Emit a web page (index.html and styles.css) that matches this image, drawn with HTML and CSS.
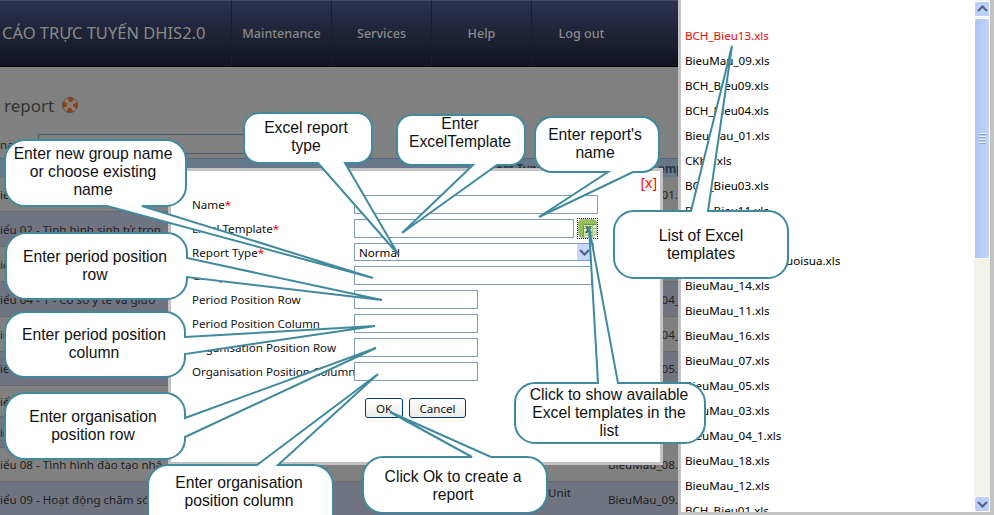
FILE: index.html
```html
<!DOCTYPE html>
<html lang="en">
<head>
    <meta charset="UTF-8">
    <title>Excel report</title>
    <link rel="stylesheet" href="styles.css">
</head>
<body>
    <div class="app">
        <div class="main">
            <div class="topbar">
                <div class="brand">CÁO TRỰC TUYẾN DHIS2.0</div>
                <div class="nav-item">Maintenance</div>
                <div class="nav-item">Services</div>
                <div class="nav-item">Help</div>
                <div class="nav-item">Log out</div>
            </div>
            <div class="content">
                <div class="heading">
                    <span>report</span>
                    <svg class="help-icon" width="16" height="16" viewBox="0 0 16 16">
                        <circle cx="8" cy="8" r="5.5" fill="none" stroke="#8c8078" stroke-width="4.500"/>
                        <circle cx="8" cy="8" r="5.5" fill="none" stroke="#8f3f12" stroke-width="4.500" stroke-dasharray="5 3.640" stroke-dashoffset="2.500"/>
                        <circle cx="8" cy="8" r="7.500" fill="none" stroke="#5f4c42" stroke-width="1"/>
                    </svg>
                </div>
                <div class="filter">
                    <span class="filter-label">na</span>
                    <div class="filter-input"></div>
                </div>
                <div class="table-head">
                    <span class="col-name">ort Type</span>
                    <span class="col-file">emp</span>
                </div>
                <div class="row"><span class="col-name">iểu 01 - Dân số</span><span class="col-file">BieuMau_01.</span></div>
                <div class="row alt"><span class="col-name">iểu 02 - Tình hình sinh tử trọn</span><span class="col-file">BieuMau_02.</span></div>
                <div class="row"><span class="col-name">iểu 03 - Tình hình</span><span class="col-file">BieuMau_03.</span></div>
                <div class="row alt"><span class="col-name">iểu 04 - 1 - Cơ sở y tế và giườ</span><span class="col-file">BieuMau_04_</span></div>
                <div class="row"><span class="col-name">iểu 04 - 2</span><span class="col-file">BieuMau_04_</span></div>
                <div class="row alt tight"><span class="col-name">iểu 05</span><span class="col-file">BieuMau_05.</span></div>
                <div class="row short"><span class="col-name">iểu 06</span><span class="col-file">BieuMau_06.</span></div>
                <div class="row alt short"><span class="col-name">iểu 07</span><span class="col-file">BieuMau_07.</span></div>
                <div class="row tight"><span class="col-name">iểu 08 - Tình hình đào tạo nhâ</span><span class="col-file">BieuMau_08.</span></div>
                <div class="row alt"><span class="col-name">iểu 09 - Hoạt động chăm sóc</span><span class="col-unit">Unit</span><span class="col-file">BieuMau_09.</span></div>
            </div>
        </div>

        <div class="panel">
            <ul class="file-list">
                <li class="selected">BCH_Bieu13.xls</li>
                <li>BieuMau_09.xls</li>
                <li>BCH_Bieu09.xls</li>
                <li>BCH_Bieu04.xls</li>
                <li>BieuMau_01.xls</li>
                <li>CKho.xls</li>
                <li>BCH_Bieu03.xls</li>
                <li>BCH_Bieu11.xls</li>
                <li>BCH_Bieu02.xls</li>
                <li>BieuMau_13_1_1_cuoisua.xls</li>
                <li>BieuMau_14.xls</li>
                <li>BieuMau_11.xls</li>
                <li>BieuMau_16.xls</li>
                <li>BieuMau_07.xls</li>
                <li>BieuMau_05.xls</li>
                <li>BieuMau_03.xls</li>
                <li>BieuMau_04_1.xls</li>
                <li>BieuMau_18.xls</li>
                <li>BieuMau_12.xls</li>
                <li>BCH_Bieu01.xls</li>
            </ul>
            <div class="scrollbar">
                <div class="scroll-btn">
                    <svg width="11" height="8" viewBox="0 0 11 8"><path d="M1 6l4.5-4.5L10 6" fill="none" stroke="#4d6185" stroke-width="2"/></svg>
                </div>
                <div class="scroll-thumb">
                    <span></span><span></span><span></span><span></span>
                </div>
                <div class="scroll-track"></div>
                <div class="scroll-btn">
                    <svg width="11" height="8" viewBox="0 0 11 8"><path d="M1 2l4.5 4.5L10 2" fill="none" stroke="#4d6185" stroke-width="2"/></svg>
                </div>
            </div>
        </div>

        <div class="dialog">
            <a class="close">[x]</a>
            <div class="form">
                <label>Name<em>*</em></label>
                <input class="field wide" type="text">
                <label>Excel Template<em>*</em></label>
                <div class="template-row">
                    <input class="field template" type="text">
                    <span class="excel-btn">
                        <svg width="19" height="19" viewBox="0 0 19 19">
                            <rect x="0.5" y="0.5" width="18" height="18" rx="3.500" fill="#6b9a3a"/>
                            <path d="M0.5 16V4a3.500 3.500 0 0 1 3.500-3.500H16a2.500 2.500 0 0 1 2.500 2.500v2H7a2 2 0 0 0-2 2v11H3a2.500 2.500 0 0 1-2.500-2.500z" fill="#94bd60"/>
                            <rect x="6" y="6" width="12" height="12" fill="#dfeccd"/>
                            <path d="M6 9.500h12M6 13h12M6 16h12M11 6v12M14.500 6v12" stroke="#a3c082" stroke-width="1"/>
                            <path d="M7 7h2.500l1 2 1-2H14l-2.200 3.500L14 14h-2.500l-1-2-1 2H7l2.200-3.500z" fill="#3a7030"/>
                        </svg>
                    </span>
                </div>
                <label>Report Type<em>*</em></label>
                <div class="select">
                    <span>Normal</span>
                    <span class="select-btn">
                        <svg width="11" height="8" viewBox="0 0 11 8"><path d="M1 2l4.500 4.500L10 2" fill="none" stroke="#4d6185" stroke-width="2"/></svg>
                    </span>
                </div>
                <label>Group</label>
                <input class="field group" type="text">
                <label>Period Position Row</label>
                <input class="field short" type="text">
                <label>Period Position Column</label>
                <input class="field short" type="text">
                <label>Organisation Position Row</label>
                <input class="field short" type="text">
                <label>Organisation Position Column</label>
                <input class="field short" type="text">
            </div>
            <div class="actions">
                <button class="btn btn-ok">OK</button>
                <button class="btn btn-cancel">Cancel</button>
            </div>
        </div>

        <svg class="callouts" width="994" height="515" viewBox="0 0 994 515">
            <path d="M25 140H166A20 20 0 0 1 186 160V186A20 20 0 0 1 166 206H142L373 278L107 206H25A20 20 0 0 1 5 186V160A20 20 0 0 1 25 140Z"/>
            <text x="93" y="159">Enter new group name</text>
            <text x="93" y="177">or choose existing</text>
            <text x="93" y="195">name</text>

            <path d="M26 233H167A20 20 0 0 1 187 253V258L382 300L187 277V279A20 20 0 0 1 167 299H26A20 20 0 0 1 6 279V253A20 20 0 0 1 26 233Z"/>
            <text x="95" y="262">Enter period position</text>
            <text x="95" y="280">row</text>

            <path d="M25 312H165A20 20 0 0 1 185 332V337L375 326L185 354V357A20 20 0 0 1 165 377H25A20 20 0 0 1 5 357V332A20 20 0 0 1 25 312Z"/>
            <text x="94" y="340">Enter period position</text>
            <text x="94" y="358">column</text>

            <path d="M25 393H165A20 20 0 0 1 185 413V418L376 348L185 437V439A20 20 0 0 1 165 459H25A20 20 0 0 1 5 439V413A20 20 0 0 1 25 393Z"/>
            <text x="93" y="422">Enter organisation</text>
            <text x="93" y="440">position row</text>

            <path d="M168 465H257L378 374L278 465H313A20 20 0 0 1 333 485V530H148V485A20 20 0 0 1 168 465Z"/>
            <text x="239" y="488">Enter organisation</text>
            <text x="239" y="506">position column</text>

            <path d="M259 113H357A15 15 0 0 1 372 128V148A15 15 0 0 1 357 163H345L398 254L318 163H259A15 15 0 0 1 244 148V128A15 15 0 0 1 259 113Z"/>
            <text x="306" y="133">Excel report</text>
            <text x="306" y="151">type</text>

            <path d="M412 115H510A15 15 0 0 1 525 130V150A15 15 0 0 1 510 165H497L402 233L473 165H412A15 15 0 0 1 397 150V130A15 15 0 0 1 412 115Z"/>
            <text x="460" y="129">Enter</text>
            <text x="460" y="147">ExcelTemplate</text>

            <path d="M552 117H642A17 17 0 0 1 659 134V155A17 17 0 0 1 642 172H633L539 217L608 172H552A17 17 0 0 1 535 155V134A17 17 0 0 1 552 117Z"/>
            <text x="595" y="140">Enter report's</text>
            <text x="595" y="158">name</text>

            <path d="M634 211H691L732 46L708 211H768A20 20 0 0 1 788 231V258A20 20 0 0 1 768 278H634A20 20 0 0 1 614 258V231A20 20 0 0 1 634 211Z"/>
            <text x="701" y="241">List of Excel</text>
            <text x="701" y="259">templates</text>

            <path d="M383 457H472L390 412L491 457H527A20 20 0 0 1 547 477V493A20 20 0 0 1 527 513H383A20 20 0 0 1 363 493V477A20 20 0 0 1 383 457Z"/>
            <text x="453" y="482">Click Ok to create a</text>
            <text x="453" y="500">report</text>

            <path d="M535 383H598L589 227L618 383H685A20 20 0 0 1 705 403V423A20 20 0 0 1 685 443H535A20 20 0 0 1 515 423V403A20 20 0 0 1 535 383Z"/>
            <text x="609" y="400">Click to show available</text>
            <text x="609" y="418">Excel templates in the</text>
            <text x="609" y="436">list</text>
        </svg>
    </div>
</body>
</html>
```

FILE: styles.css
```css
body {
    margin: 0;
    padding: 0;
    font-family: "Noto Sans", sans-serif;
    font-size: 11.6px;
    color: #000;
    background: #808080;
}

.app {
    position: relative;
    display: flex;
    width: 994px;
    height: 515px;
    overflow: hidden;
}

.main {
    width: 678px;
    flex: none;
}

/* header */
.topbar {
    display: flex;
    height: 65px;
    border-top: 1px solid #4a4a5c;
    border-bottom: 1px solid #000;
    background: linear-gradient(to bottom, #2c3350, #11141e);
    color: #8a8a8a;
}

.brand {
    width: 231px;
    flex: none;
    padding-left: 2px;
    box-sizing: border-box;
    font-size: 16.5px;
    line-height: 64px;
    white-space: nowrap;
    overflow: hidden;
}

.nav-item {
    width: 100px;
    flex: none;
    border-left: 1px solid #1a1e2c;
    box-sizing: border-box;
    text-align: center;
    font-size: 12.6px;
    font-weight: 500;
    line-height: 65px;
}

/* dimmed page */
.content {
    height: 448px;
    background: #808080;
    color: #222;
}

.heading {
    display: flex;
    align-items: center;
    gap: 8px;
    height: 24px;
    padding: 26px 0 0 4px;
    margin-bottom: -1px;
    font-size: 17px;
    color: #333;
}

.filter {
    display: flex;
    align-items: center;
    height: 20px;
    margin-top: 18px;
}

.filter-label {
    width: 38px;
    flex: none;
}

.filter-input {
    width: 240px;
    height: 18px;
    border: 1px solid #44606e;
}

.table-head {
    display: flex;
    height: 18px;
    margin-top: 4px;
    background: #67788a;
    border-top: 1px solid #55687a;
    font-weight: bold;
    color: #2a3442;
    line-height: 20px;
}

.table-head .col-name {
    width: 658px;
    padding-left: 496px;
    box-sizing: border-box;
}

.row {
    display: flex;
    align-items: center;
    height: 34px;
    border-bottom: 1px solid #6a6a6e;
    background: #808080;
}

.row.alt {
    background: #6f7480;
}

.row.tight {
    height: 33px;
}

.row.short {
    height: 30px;
}

.col-name {
    width: 548px;
    flex: none;
    white-space: nowrap;
    overflow: hidden;
}

.col-unit {
    width: 60px;
    flex: none;
    margin-top: -14px;
}

.col-file {
    margin-left: auto;
    width: 70px;
    flex: none;
    white-space: nowrap;
    overflow: hidden;
}

.table-head .col-file {
    width: 20px;
}

/* template list on the right */
.panel {
    display: flex;
    flex: 1;
    height: 512px;
    border-left: 3px solid #c2c2c2;
    border-right: 4px solid #c2c2c2;
    border-bottom: 3px solid #c2c2c2;
    background: #fff;
}

.file-list {
    flex: 1;
    margin: 0;
    padding: 23px 0 0 4px;
    list-style: none;
    overflow: hidden;
}

.file-list li {
    height: 25px;
    line-height: 25px;
    white-space: nowrap;
}

.file-list .selected {
    color: #f00;
}

.scrollbar {
    display: flex;
    flex-direction: column;
    width: 16px;
    flex: none;
    background: #f4f3ea;
    padding-top: 1px;
    box-sizing: border-box;
}

.scroll-btn {
    display: flex;
    align-items: center;
    justify-content: center;
    height: 16px;
    border: 1px solid #fff;
    border-radius: 2px;
    background: #bccff8;
    box-sizing: border-box;
}

.scroll-thumb {
    display: flex;
    flex-direction: column;
    align-items: center;
    justify-content: center;
    gap: 1px;
    height: 241px;
    margin-top: 1px;
    border: 1px solid #fff;
    border-radius: 2px;
    background: linear-gradient(to right, #aec4f3, #c4d5fa);
    box-sizing: border-box;
}

.scroll-thumb span {
    width: 7px;
    height: 1px;
    background: #eef3fe;
    border-bottom: 1px solid #8ea6d8;
}

.scroll-track {
    flex: 1;
}

/* dialog */
.dialog {
    position: absolute;
    left: 168px;
    top: 168px;
    width: 489px;
    height: 291px;
    border: 3px solid #c2c2c2;
    background: #fff;
}

.close {
    position: absolute;
    top: 2px;
    right: 3px;
    color: #f00;
    font-size: 14px;
}

.form {
    display: grid;
    grid-template-columns: 162px 244px;
    row-gap: 5px;
    padding: 24px 0 0 21px;
}

.form label {
    height: 18px;
    line-height: 20px;
    white-space: nowrap;
    color: #111;
}

.form em {
    font-style: normal;
    color: #f00;
}

.field {
    display: block;
    height: 19px;
    margin: 0;
    padding: 0;
    border: 1px solid #7f9db9;
    box-sizing: border-box;
    background: #fff;
}

.wide {
    width: 244px;
}

.group {
    width: 238px;
}

.short {
    width: 124px;
}

.template {
    width: 220px;
}

.template-row {
    display: flex;
    gap: 4px;
}

.excel-btn {
    display: block;
    width: 19px;
    height: 19px;
    outline: 1px dotted #00f;
}

.select {
    display: flex;
    justify-content: space-between;
    align-items: center;
    width: 240px;
    height: 18px;
    padding: 0 1px 0 4px;
    border: 1px solid #7f9db9;
    box-sizing: border-box;
}

.select-btn {
    display: flex;
    align-items: center;
    justify-content: center;
    width: 15px;
    height: 16px;
    background: #c6d6f9;
}

.actions {
    display: flex;
    gap: 6px;
    padding: 17px 0 0 194px;
}

.btn {
    height: 20px;
    padding: 0;
    border: 1px solid #003c74;
    border-radius: 3px;
    background: linear-gradient(to bottom, #fff, #ecebe5);
    font-family: "Noto Sans", sans-serif;
    font-size: 11.6px;
    color: #111;
}

.btn-ok {
    width: 38px;
}

.btn-cancel {
    width: 57px;
}

/* annotation bubbles over the screenshot */
.callouts {
    position: absolute;
    left: 0;
    top: 0;
}

.callouts path {
    fill: #fff;
    stroke: #3f8a9e;
    stroke-width: 2;
    stroke-linejoin: miter;
}

.callouts text {
    font-family: "Liberation Sans", sans-serif;
    font-size: 15.7px;
    fill: #111;
    text-anchor: middle;
}
```
